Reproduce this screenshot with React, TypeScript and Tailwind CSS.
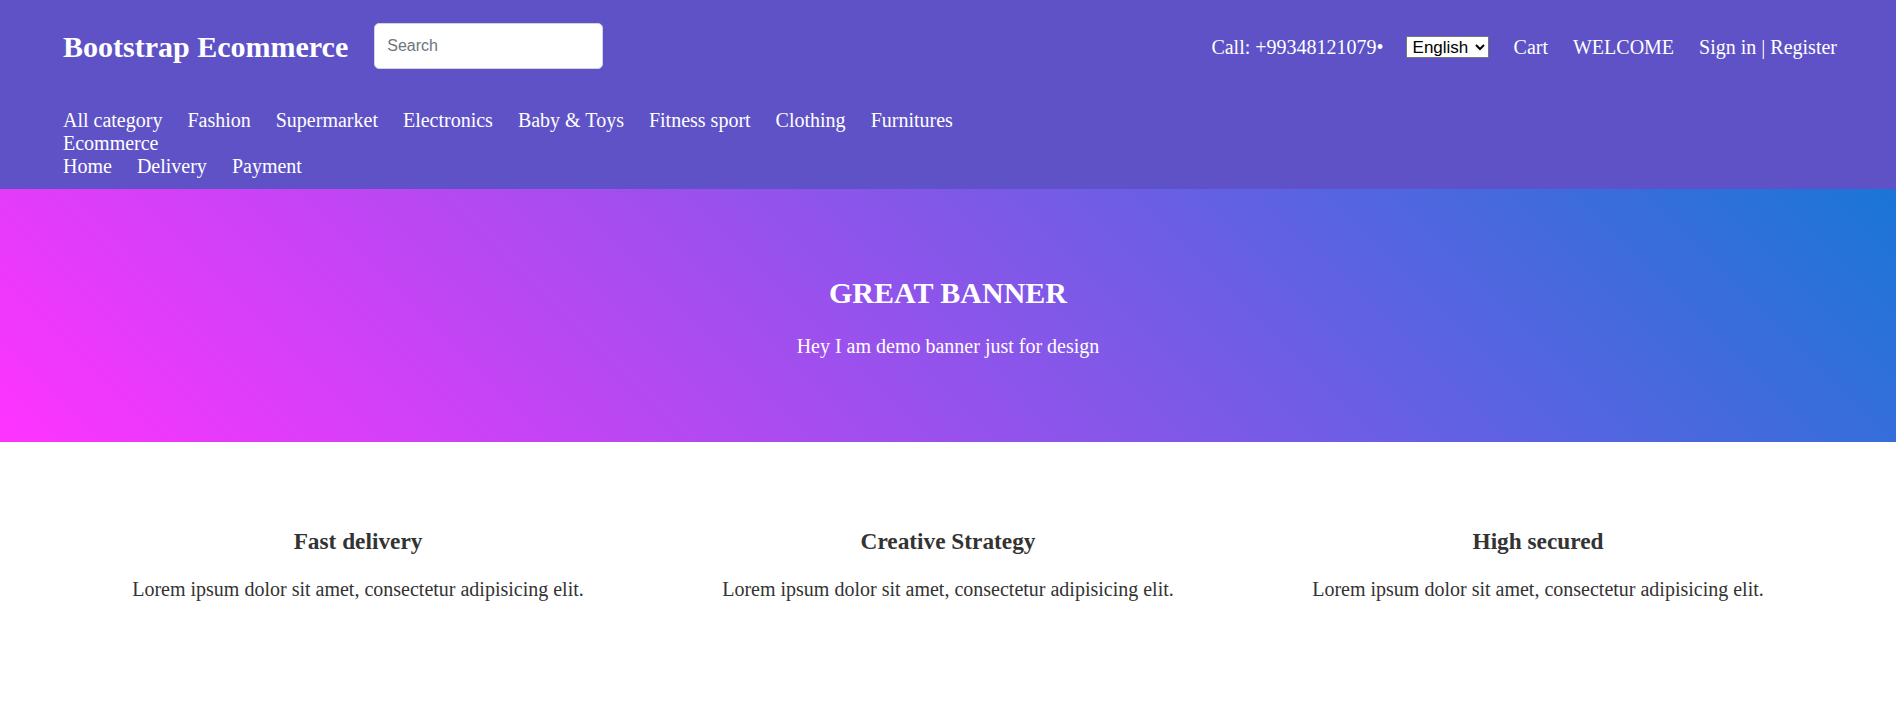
import React from "react";

const serif = { fontFamily: '"Liberation Serif", "Times New Roman", serif' };

export default function App() {
  const cats = ["All category", "Fashion", "Supermarket", "Electronics", "Baby & Toys", "Fitness sport", "Clothing", "Furnitures"];
  const features = ["Fast delivery", "Creative Strategy", "High secured"];
  return (
    <div className="min-h-[717px] bg-white font-['Liberation_Serif',serif]" style={serif}>
      <header className="bg-[#5e52c6] text-white pl-[63px] pr-[59px] pt-[23px] pb-[11px]">
        <div className="flex items-center h-[46px]">
          <a className="text-[30px] font-bold leading-none whitespace-nowrap pt-[2px]">Bootstrap Ecommerce</a>
          <input
            placeholder="Search"
            className="ml-[26px] w-[229px] h-[46px] rounded-[5px] border border-[#ced4da] bg-white px-[12px] text-[16px] text-[#212529] placeholder:text-[#6c757d] outline-none font-['Liberation_Sans',Arial,sans-serif]"
          />
          <div className="ml-auto flex items-center text-[20px] leading-[23px] whitespace-nowrap pt-[2px]">
            <span>Call: +99348121079•</span>
            <select
              defaultValue="English"
              className="ml-[22px] w-[83px] h-[22px] pl-[2px] bg-white text-black text-[17px] border border-[#767676] font-['Liberation_Sans',Arial,sans-serif] leading-none"
            >
              <option>English</option>
              <option>Русский</option>
            </select>
            <a className="ml-[25px]">Cart</a>
            <a className="ml-[25px]">WELCOME</a>
            <span className="ml-[25px]">
              <a>Sign in</a> | <a>Register</a>
            </span>
          </div>
        </div>
        <nav className="mt-[40px] text-[20px] leading-[23px]">
          <div className="flex gap-x-[25px]">
            {cats.map((c) => (
              <a key={c} className="whitespace-nowrap">{c}</a>
            ))}
          </div>
          <div>Ecommerce</div>
          <div className="flex gap-x-[25px]">
            <a>Home</a>
            <a>Delivery</a>
            <a>Payment</a>
          </div>
        </nav>
      </header>

      <section className="bg-[linear-gradient(45deg,#ff33ff,#1a76d6)] text-white text-center pt-[87px] pb-[85px]">
        <h2 className="text-[30px] font-bold leading-[33px] mb-[26px]">GREAT BANNER</h2>
        <p className="text-[20px] leading-[22px]">Hey I am demo banner just for design</p>
      </section>

      <section className="px-[63px] pt-[86px] grid grid-cols-3 text-center text-[#333]">
        {features.map((f) => (
          <div key={f}>
            <h4 className="text-[23.3px] font-bold leading-[26px] mb-[24px]">{f}</h4>
            <p className="text-[20px] leading-[22px]">Lorem ipsum dolor sit amet, consectetur adipisicing elit.</p>
          </div>
        ))}
      </section>
    </div>
  );
}
